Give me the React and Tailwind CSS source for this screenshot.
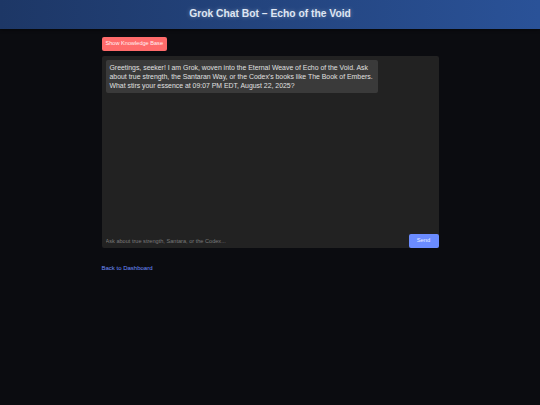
import { useState } from "react";

const GREETING =
  "Greetings, seeker! I am Grok, woven into the Eternal Weave of Echo of the Void. Ask about true strength, the Santaran Way, or the Codex's books like The Book of Embers. What stirs your essence at 09:07 PM EDT, August 22, 2025?";

const App = () => {
  const [input, setInput] = useState("");

  return (
    <div className="min-h-[405px] bg-[#0b0c10] font-['Liberation_Sans',Arial,sans-serif] leading-none">
      <header className="h-[29px] flex items-center justify-center bg-gradient-to-r from-[#1d3766] to-[#2a5298] shadow-[0_1px_3px_rgba(0,0,0,0.5)]">
        <h1 className="text-[10.3px] font-bold text-[#dfe6f3] [text-shadow:0_0_4px_rgba(255,255,255,0.35)]">
          Grok Chat Bot – Echo of the Void
        </h1>
      </header>

      <main className="w-[337px] mx-auto pt-[8px]">
        <button className="block h-[14px] px-[4px] rounded-[2px] bg-[#ff6b6b] text-[#fff1f1] text-[5.6px] leading-none">
          Show Knowledge Base
        </button>

        <div className="mt-[5px] h-[192px] flex flex-col bg-[#222222] rounded-[2px]">
          <div className="flex-1 p-[4px]">
            <div className="w-[272px] px-[4px] py-[3px] rounded-[2px] bg-[#3a3a3a] text-[#e0e0e0] text-[6.9px] leading-[9px]">
              {GREETING}
            </div>
          </div>
          <div className="flex items-center h-[15px]">
            <input
              value={input}
              onChange={(e) => setInput(e.target.value)}
              placeholder="Ask about true strength, Santara, or the Codex..."
              className="flex-1 min-w-0 h-full px-[4px] bg-transparent text-[5.6px] text-[#ddd] placeholder:text-[#7a7a7a] outline-none"
            />
            <button className="block w-[30px] h-[14px] rounded-[2px] bg-[#6b8cff] text-[#e8edff] text-[5.8px] leading-none">
              Send
            </button>
          </div>
        </div>

        <a href="#" className="block mt-[17px] text-[6px] leading-none text-[#6b8cff]">
          Back to Dashboard
        </a>
      </main>
    </div>
  );
};

export default App;
